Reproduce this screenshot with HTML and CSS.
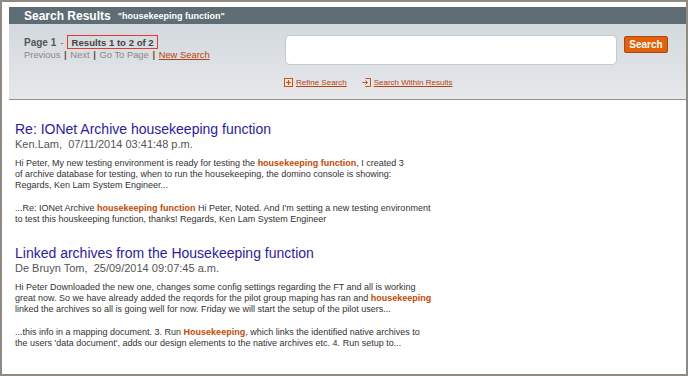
FILE: index.html
```html
<!DOCTYPE html>
<html lang="en">
<head>
  <meta charset="UTF-8" />
  <title>Search Results</title>
  <link rel="stylesheet" href="styles.css">
</head>
<body>
  <div class="frame">
    <div class="bar">
      <span class="bar-title">Search Results</span>
      <span class="bar-query">"housekeeping function"</span>
    </div>
    <div class="panel">
      <div class="paging">
        <div class="paging-top">
          <span class="page-no">Page 1</span>
          <span class="dash">-</span>
          <span class="count">Results 1 to 2 of 2</span>
        </div>
        <div class="paging-nav">
          <span class="off">Previous</span> <span class="sep">|</span>
          <span class="off">Next</span> <span class="sep">|</span>
          <span class="off">Go To Page</span> <span class="sep">|</span>
          <a href="#" class="link">New Search</a>
        </div>
      </div>
      <div class="searchbox">
        <div class="search-row">
          <input type="text" class="query">
          <button class="btn">Search</button>
        </div>
        <div class="search-links">
          <a href="#" class="link small">
            <svg width="9" height="9" viewBox="0 0 9 9"><rect x="0.5" y="0.5" width="8" height="8" fill="#f6e6d6" stroke="#c8501a"/><path d="M4.5 2v5M2 4.5h5" stroke="#c8501a" stroke-width="1.2"/></svg>
            Refine Search
          </a>
          <a href="#" class="link small">
            <svg width="9" height="9" viewBox="0 0 9 9"><path d="M3.5 0.5h5v8h-5M0.5 4.5h5M3.5 2.5l2 2-2 2" fill="none" stroke="#c8501a"/></svg>
            Search Within Results
          </a>
        </div>
      </div>
    </div>

    <div class="results">
      <div class="result">
        <a href="#" class="title">Re: IONet Archive housekeeping function</a>
        <div class="author">Ken.Lam,&nbsp; 07/11/2014 03:41:48 p.m.</div>
        <p class="snippet">Hi Peter, My new testing environment is ready for testing the <b>housekeeping function</b>, I created 3<br>
        of archive database for testing, when to run the housekeeping, the domino console is showing:<br>
        Regards, Ken Lam System Engineer...</p>
        <p class="snippet">...Re: IONet Archive <b>housekeeping function</b> Hi Peter, Noted. And I'm setting a new testing environment<br>
        to test this houskeeping function, thanks! Regards, Ken Lam System Engineer</p>
      </div>
      <div class="result">
        <a href="#" class="title">Linked archives from the Housekeeping function</a>
        <div class="author">De Bruyn Tom,&nbsp; 25/09/2014 09:07:45 a.m.</div>
        <p class="snippet">Hi Peter Downloaded the new one, changes some config settings regarding the FT and all is working<br>
        great now. So we have already added the reqords for the pilot group maping has ran and <b>housekeeping</b><br>
        linked the archives so all is going well for now. Friday we will start the setup of the pilot users...</p>
        <p class="snippet">...this info in a mapping document. 3. Run <b>Housekeeping</b>, which links the identified native archives to<br>
        the users 'data document', adds our design elements to the native archives etc. 4. Run setup to...</p>
      </div>
    </div>
  </div>
</body>
</html>
```
FILE: styles.css
```css
body {
  margin: 0;
  font-family: "Liberation Sans", Arial, sans-serif;
  background: white;
}
.frame {
  width: 688px;
  height: 376px;
  box-sizing: border-box;
  border: 2px solid #8f8b84;
  padding: 5px 0 0 7px;
  overflow: hidden;
}
.bar {
  height: 17px;
  background: #5e6d73;
  padding-left: 15px;
  display: flex;
  align-items: center;
  gap: 7px;
  color: white;
  font-weight: bold;
}
.bar-title { font-size: 12px; }
.bar-query { font-size: 9px; }
.panel {
  height: 75px;
  background: linear-gradient(#d3d9de, #e6e8eb);
  border-bottom: 1px solid #8e9092;
  display: flex;
  padding-left: 15px;
}
.paging {
  width: 261px;
  padding-top: 11px;
  font-size: 10px;
}
.paging-top {
  display: flex;
  align-items: center;
  color: #555;
}
.page-no { font-weight: bold; }
.dash { margin: 0 3px 0 4px; color: #777; }
.count {
  font-weight: bold;
  font-size: 9.6px;
  color: #444;
  border: 1px solid #e53935;
  padding: 1px 3px 0 4px;
}
.paging-nav {
  font-size: 9.4px;
  color: #888;
}
.sep {
  font-weight: bold;
  color: #6a4b40;
  margin: 0 1px;
}
.link {
  color: #b8410f;
  text-decoration: underline;
}
.searchbox {
  padding-top: 11px;
}
.search-row {
  display: flex;
  align-items: flex-start;
  gap: 7px;
}
.query {
  width: 332px;
  height: 30px;
  box-sizing: border-box;
  border: 1px solid #c4c9cc;
  border-radius: 5px;
  background: white;
}
.btn {
  width: 44px;
  height: 17px;
  margin-top: 1px;
  padding: 0;
  background: #e5600a;
  border: 1px solid #a84a10;
  border-radius: 2px;
  color: white;
  font-family: inherit;
  font-weight: bold;
  font-size: 10px;
}
.search-links {
  display: flex;
  gap: 15px;
  margin-top: 13px;
  margin-left: -1px;
}
.small {
  font-size: 8px;
  display: flex;
  align-items: center;
  gap: 3px;
}
.results {
  padding: 22px 0 0 6px;
}
.result { margin-bottom: 21px; }
.title {
  display: block;
  font-size: 14px;
  line-height: 15px;
  color: #2a1ba8;
  text-decoration: none;
}
.author {
  font-size: 11px;
  line-height: 14px;
  color: #555;
}
.snippet {
  font-size: 9px;
  line-height: 11px;
  color: #333;
  margin: 7px 0 0;
  white-space: nowrap;
}
.snippet + .snippet { margin-top: 12px; }
.snippet b { color: #c24a06; }
```
